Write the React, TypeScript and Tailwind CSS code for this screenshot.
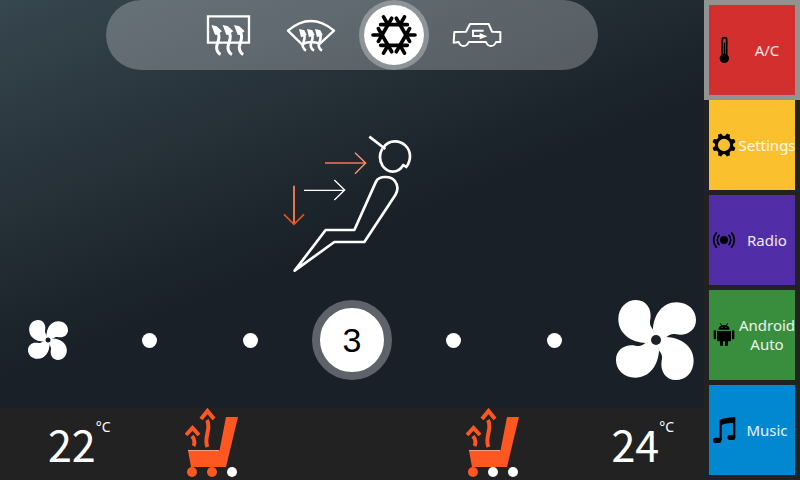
import React from "react";

const QUARTERS = [0, 90, 180, 270];
const SIXTHS = [0, 60, 120, 180, 240, 300];
const EIGHTHS = [0, 45, 90, 135, 180, 225, 270, 315];

function RearDefrostIcon() {
  return (
    <svg viewBox="318 42 135 126" className="h-[42px] w-[45px]" fill="none" stroke="white">
      <path d="M324 49H447V128H324Z" strokeWidth="7" />
      {[0, 34, 68].map((x) => (
        <g key={x} transform={`translate(${x} 0)`}>
          <path d="M334 75L350 79L366 94L359 98L355 105L345 104Z" fill="white" stroke="none" />
          <path d="M353 96C366 118 344 132 351 150Q354 160 362 163" strokeWidth="9" />
        </g>
      ))}
    </svg>
  );
}

function WindshieldIcon() {
  return (
    <svg viewBox="558 54 150 102" className="h-[34px] w-[50px]" fill="none" stroke="white">
      <path d="M564 92Q632 34 702 92L660 131Q632 120 606 133Z" strokeWidth="7" strokeLinejoin="round" />
      {[0, 24, 48].map((x) => (
        <g key={x} transform={`translate(${x} 0)`}>
          <path d="M597 87L613 91L620 105L611 109L603 112Z" fill="white" stroke="none" />
          <path d="M611 102C621 118 604 127 609 141Q611 148 618 152" strokeWidth="8" />
        </g>
      ))}
    </svg>
  );
}

function SnowflakeIcon() {
  return (
    <svg viewBox="-75 -75 150 150" className="size-[50px]" fill="none" stroke="black" strokeWidth="11" strokeLinecap="round">
      {SIXTHS.map((a) => (
        <path key={a} d="M-40 -31H40M36 0H63" transform={`rotate(${a})`} />
      ))}
    </svg>
  );
}

function RecirculateIcon() {
  return (
    <svg viewBox="336 68 150 78" className="h-[26px] w-[50px]" fill="none" stroke="white" strokeWidth="6">
      <path d="M343 98L378 97L390 74H446L456 97L481 98V128H468C462 144 444 144 438 128H386C380 144 362 144 356 128L341 130Z" strokeLinejoin="round" />
      <path d="M431 94H399V110H420" />
      <path d="M419 101L442 111L419 120Z" fill="white" stroke="none" />
    </svg>
  );
}

function AirflowFigure() {
  return (
    <svg viewBox="6 0 480 480" className="size-40" fill="none" role="img" aria-label="Airflow direction">
      <g stroke="white" strokeWidth="8" strokeLinejoin="round">
        <path d="M298 50L346 87M340 83Q352 64 375 64A45 45 0 0 1 420 108Q420 126 409 141L400 135Q388 155 368 155Q350 154 338 138Q322 112 337 86" />
        <path d="M74 452L167 330H253L318 185C326 167 364 166 376 185C386 199 384 211 376 225L283 366H193Z" />
      </g>
      <path d="M165 129H284" stroke="#f0795a" strokeWidth="5" />
      <path d="M255 98L287 129L255 161" stroke="#ff9878" strokeWidth="4" />
      <path d="M102 211H224M193 180L224 210L193 240" stroke="white" strokeWidth="4" />
      <path d="M72 197V311" stroke="#e97450" strokeWidth="6" />
      <path d="M42 283L72 313L102 283" stroke="#e8501f" strokeWidth="5" />
    </svg>
  );
}

function FanIcon({ className }: { className: string }) {
  return (
    <svg viewBox="-120 -120 240 240" className={className} fill="white">
      {QUARTERS.map((a) => (
        <path
          key={a}
          transform={`rotate(${a})`}
          d="M0 0L-9 -30C-8 -73 18 -113 62 -113C98 -113 120 -88 120 -60C120 -28 92 -12 62 -17C50 -20 42 -18 33 -10Z"
        />
      ))}
      <circle r="27" />
      <circle r="15" fill="#192027" />
    </svg>
  );
}

function SeatIcon() {
  return (
    <svg viewBox="185 407 54 59" className="h-[59px] w-[54px]" fill="none" stroke="#ff5722" strokeWidth="4">
      <path d="M188 449.5H219.5L226 416H238L226 466H191Z" fill="#ff5722" stroke="none" />
      <path d="M188 449.5H219" stroke="#e8a58e" strokeWidth="1" />
      <path d="M201 418L207.500 410L214 418M207 419C212 428 203 436 207.500 446" />
      <path d="M186 434L192.500 427L199 434M192 435Q196 440 193.500 445" />
    </svg>
  );
}

function ThermometerIcon() {
  return (
    <svg viewBox="50 108 75 84" className="h-7 w-[25px]">
      <rect x="81" y="113" width="13" height="58" rx="6" fill="none" stroke="black" strokeWidth="5" />
      <circle cx="87" cy="175" r="14" />
      <path d="M87.500 128V165" stroke="black" strokeWidth="4" />
    </svg>
  );
}

function GearIcon() {
  return (
    <svg viewBox="-36 -36 72 72" className="size-6">
      <circle r="23" fill="none" stroke="black" strokeWidth="9" />
      {EIGHTHS.map((a) => (
        <path key={a} transform={`rotate(${a + 22.5})`} d="M-8 -24L-5 -35H5L8 -24Z" />
      ))}
    </svg>
  );
}

function BroadcastIcon() {
  return (
    <svg viewBox="-36 -27 72 54" className="h-[18px] w-6" fill="none" stroke="black" strokeWidth="5">
      <circle r="12" fill="black" stroke="none" />
      <path d="M-14 -16Q-26 0 -14 16M14 -16Q26 0 14 16M-22 -23Q-40 0 -22 23M22 -23Q40 0 22 23" />
    </svg>
  );
}

function AndroidIcon() {
  return (
    <svg viewBox="336 99 72 72" className="size-6">
      <path d="M355 119Q356 105 372 105Q388 105 389 119Z" />
      <path d="M361 100L366 109M383 100L378 109" stroke="black" strokeWidth="3" />
      <path d="M365 112.500H368M376 112.500H379" stroke="#388e3c" strokeWidth="3" />
      <path d="M351 123H393V150Q393 154 389 154H384V167H375V154H369V167H360V154H355Q351 154 351 150Z" />
      <rect x="341" y="121" width="7" height="27" rx="3" />
      <rect x="396" y="121" width="7" height="27" rx="3" />
    </svg>
  );
}

function MusicIcon() {
  return (
    <svg viewBox="50 138 75 84" className="h-7 w-[25px]">
      <path d="M73 150Q80 144 120 141V203H113V159Q92 158 79 165V211H73Z" />
      <rect x="53" y="203" width="25" height="16" rx="7" />
      <rect x="96" y="195" width="24" height="15" rx="7" />
    </svg>
  );
}

function SideItem({
  label,
  color,
  icon,
  selected = false,
}: {
  label: string;
  color: string;
  icon: React.ReactNode;
  selected?: boolean;
}) {
  return (
    <button
      type="button"
      aria-pressed={selected}
      className={`flex min-h-[90px] flex-1 items-center text-[15px] leading-[19px] text-white/90 ${color} ${
        selected ? "ring-[5px] ring-[#929292]" : ""
      }`}
    >
      <span className="flex w-[30px] shrink-0 justify-center">{icon}</span>
      <span className="flex min-w-0 flex-1 justify-center text-center">{label}</span>
    </button>
  );
}

function Temperature({ value, className }: { value: number; className: string }) {
  return (
    <p className={`flex items-start text-white ${className}`}>
      <span className="font-['Noto_Sans_CJK_SC',sans-serif] text-[43px] leading-[70px]">{value}</span>
      <span className="pt-[11px] text-sm leading-4">°C</span>
    </p>
  );
}

function SeatHeater({ side, level }: { side: string; level: number }) {
  return (
    <button type="button" aria-label={`${side} seat heating, level ${level}`} className="flex flex-col items-center">
      <SeatIcon />
      <span className="flex gap-[10px]">
        {[1, 2, 3].map((n) => (
          <span key={n} className={`size-[10px] rounded-full ${n <= level ? "bg-[#ff5722]" : "bg-white"}`} />
        ))}
      </span>
    </button>
  );
}

function ModeButton({ label, active = false, children }: { label: string; active?: boolean; children: React.ReactNode }) {
  return (
    <button type="button" aria-label={label} aria-pressed={active} className="flex w-[83px] items-center justify-center">
      {active ? (
        <span className="flex size-[70px] items-center justify-center rounded-full border-[5px] border-white/30 bg-white bg-clip-padding">
          {children}
        </span>
      ) : (
        children
      )}
    </button>
  );
}

export default function App() {
  const fanSpeed = 3;
  return (
    <div className="flex min-h-screen bg-[#222222] font-['Noto_Sans',sans-serif]">
      <main className="flex min-w-0 flex-1 flex-col">
        <section className="flex flex-1 flex-col items-center bg-linear-158 from-[#37474f] to-[#192027] to-55%">
          <div className="flex h-[70px] w-[70%] justify-center rounded-full bg-white/25 pl-0.5">
            <ModeButton label="Rear defrost"><RearDefrostIcon /></ModeButton>
            <ModeButton label="Windshield defrost"><WindshieldIcon /></ModeButton>
            <ModeButton label="Air conditioning" active><SnowflakeIcon /></ModeButton>
            <ModeButton label="Recirculate air"><RecirculateIcon /></ModeButton>
          </div>
          <div className="flex flex-1 items-end pt-2 pb-5">
            <AirflowFigure />
          </div>
          <div className="mb-7 flex h-20 w-full items-center pr-2 pl-7">
            <FanIcon className="size-10 shrink-0" />
            <div role="group" aria-label="Fan speed" className="mr-[11px] ml-[31px] grid flex-1 grid-cols-5 place-items-center">
              {[1, 2, 3, 4, 5].map((n) =>
                n === fanSpeed ? (
                  <button
                    key={n}
                    type="button"
                    aria-pressed="true"
                    className="size-20 rounded-full border-8 border-[#5e636a] bg-white font-['Liberation_Sans',sans-serif] text-[34px] leading-none text-black"
                  >
                    {n}
                  </button>
                ) : (
                  <button key={n} type="button" aria-label={`Fan speed ${n}`} className="size-[15px] rounded-full bg-white" />
                )
              )}
            </div>
            <FanIcon className="size-20 shrink-0" />
          </div>
        </section>
        <footer className="grid h-[72px] grid-cols-[160fr_104fr_177fr_104fr_159fr] justify-items-center">
          <Temperature value={22} className="ml-12 justify-self-start" />
          <SeatHeater side="Left" level={2} />
          <span />
          <SeatHeater side="Right" level={1} />
          <Temperature value={24} className="mr-[30px] justify-self-end" />
        </footer>
      </main>
      <nav className="flex w-24 shrink-0 flex-col gap-[5px] p-[5px]">
        <SideItem label="A/C" color="bg-[#d32f2f]" icon={<ThermometerIcon />} selected />
        <SideItem label="Settings" color="bg-[#fbc02d]" icon={<GearIcon />} />
        <SideItem label="Radio" color="bg-[#512da8]" icon={<BroadcastIcon />} />
        <SideItem label="Android Auto" color="bg-[#388e3c]" icon={<AndroidIcon />} />
        <SideItem label="Music" color="bg-[#0288d1]" icon={<MusicIcon />} />
      </nav>
    </div>
  );
}
